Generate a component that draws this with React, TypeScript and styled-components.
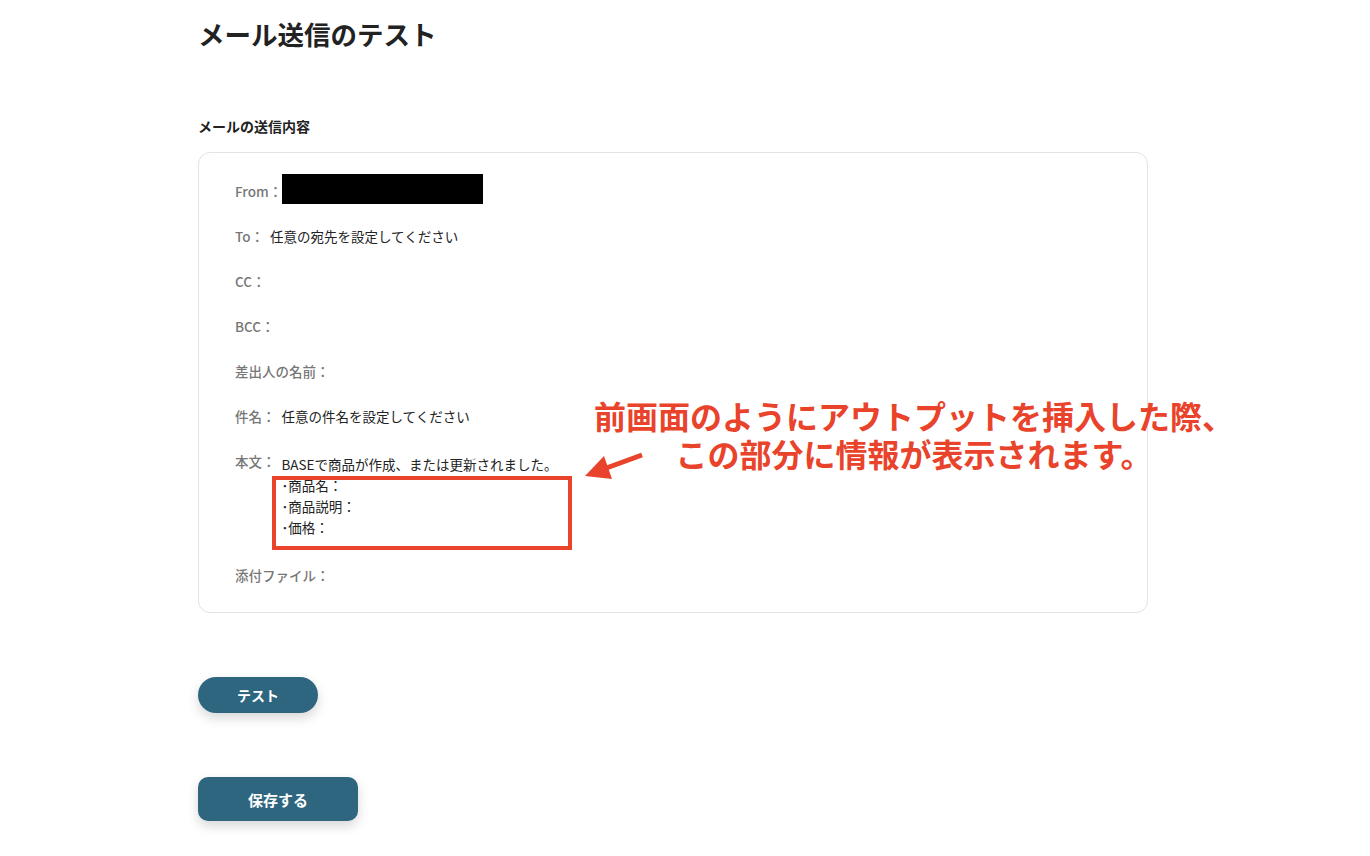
import styled, { createGlobalStyle } from "styled-components"

const GlobalStyle = createGlobalStyle`
  body {
    margin: 0;
    background: #ffffff;
    font-family: "Noto Sans CJK JP", "Noto Sans", sans-serif;
    color: #222222;
  }
`;

const Page = styled.div`
  width: 950px;
  padding: 14px 0 40px 198px;
`;

const Title = styled.h1`
  margin: 0;
  font-size: 26.5px;
  line-height: 40px;
  font-weight: 700;
  color: #222222;
`;

const SectionLabel = styled.div`
  margin-top: 62px;
  font-size: 14px;
  line-height: 21px;
  font-weight: 700;
  color: #222222;
`;

const Card = styled.div`
  position: relative;
  margin-top: 15px;
  border: 1px solid #e3e3e3;
  border-radius: 12px;
  padding: 16px 36px 14px;
`;

const Row = styled.div<{ $extraBottom?: number }>`
  display: flex;
  align-items: flex-start;
  padding: 12px 0 ${(p) => 12 + (p.$extraBottom || 0)}px;
  font-size: 13.5px;
  line-height: 21px;
`;

const Label = styled.span`
  flex: none;
  font-weight: 500;
  color: #777777;
`;

const Value = styled.div<{ $offset?: number }>`
  position: relative;
  margin-left: 6px;
  padding-top: ${(p) => p.$offset || 0}px;
  color: #222222;
`;

const Redacted = styled.div`
  width: 201px;
  height: 30px;
  margin: -7px 0 -2px 0;
  background: #000000;
`;

const BodyLine = styled.div`
  white-space: nowrap;
`;

const HighlightBox = styled.div`
  position: absolute;
  left: -10px;
  top: 25px;
  width: 300px;
  height: 74px;
  box-sizing: border-box;
  border: 4px solid #e9432b;
`;

const Callout = styled.div`
  position: absolute;
  left: 385px;
  top: 243px;
  width: 660px;
  text-align: center;
  font-size: 32px;
  font-weight: 700;
  color: #e9432b;
  white-space: nowrap;
`;

const CalloutLine = styled.div`
  line-height: 38px;
  height: 38px;
`;

const Arrow = styled.svg`
  position: absolute;
  left: 382px;
  top: 295px;
  width: 66px;
  height: 36px;
`;

const PillButton = styled.button<{ $w: number; $h: number; $r: number; $fs: number }>`
  display: block;
  width: ${(p) => p.$w}px;
  height: ${(p) => p.$h}px;
  border: none;
  border-radius: ${(p) => p.$r}px;
  background: #2e6680;
  color: #ffffff;
  font-family: "Noto Sans CJK JP", "Noto Sans", sans-serif;
  font-size: ${(p) => p.$fs}px;
  font-weight: 700;
  box-shadow: 0 5px 12px rgba(0, 0, 0, 0.16);
  cursor: pointer;
`;

const ButtonArea = styled.div<{ $top: number }>`
  margin-top: ${(p) => p.$top}px;
`;

const simpleRows = [
  { label: "To：", value: "任意の宛先を設定してください" },
  { label: "CC：", value: "" },
  { label: "BCC：", value: "" },
  { label: "差出人の名前：", value: "" },
  { label: "件名：", value: "任意の件名を設定してください" },
]

const bodyLines = [
  "BASEで商品が作成、または更新されました。",
  "･商品名：",
  "･商品説明：",
  "･価格：",
]

export default function App() {
  return (
    <>
      <GlobalStyle />
      <Page>
        <Title>メール送信のテスト</Title>
        <SectionLabel>メールの送信内容</SectionLabel>
        <Card>
          <Row>
            <Label>From：</Label>
            <Redacted />
          </Row>
          {simpleRows.map((r) => (
            <Row key={r.label}>
              <Label>{r.label}</Label>
              {r.value && <Value>{r.value}</Value>}
            </Row>
          ))}
          <Row $extraBottom={3}>
            <Label>本文：</Label>
            <Value $offset={3}>
              {bodyLines.map((l) => (
                <BodyLine key={l}>{l}</BodyLine>
              ))}
              <HighlightBox />
            </Value>
          </Row>
          <Row>
            <Label>添付ファイル：</Label>
          </Row>

          <Callout>
            <CalloutLine>前画面のようにアウトプットを挿入した際、</CalloutLine>
            <CalloutLine>この部分に情報が表示されます。</CalloutLine>
          </Callout>
          <Arrow viewBox="0 0 66 36">
            <line x1="61" y1="7" x2="20" y2="22" stroke="#e9432b" strokeWidth="5" />
            <polygon points="4,28 23,8 31,31" fill="#e9432b" />
          </Arrow>
        </Card>

        <ButtonArea $top={64}>
          <PillButton $w={120} $h={36} $r={18} $fs={14}>テスト</PillButton>
        </ButtonArea>
        <ButtonArea $top={64}>
          <PillButton $w={160} $h={44} $r={10} $fs={15}>保存する</PillButton>
        </ButtonArea>
      </Page>
    </>
  )
}
